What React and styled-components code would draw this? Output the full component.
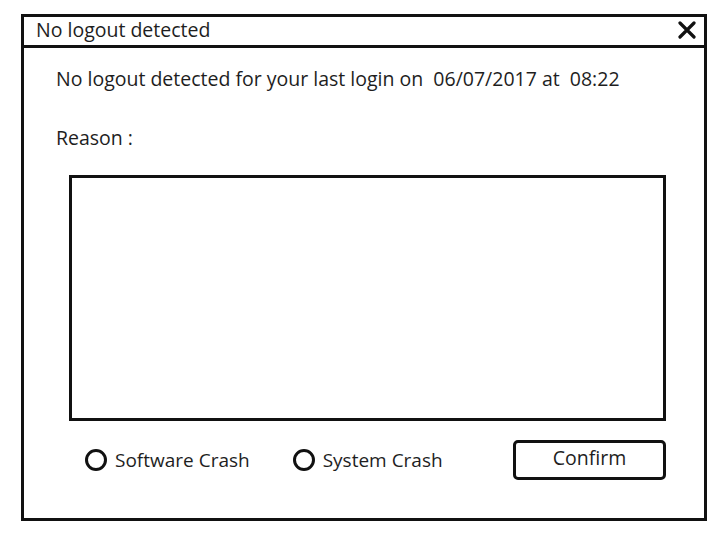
import React from "react";
import styled, { createGlobalStyle } from "styled-components";

const GlobalStyle = createGlobalStyle`
  html, body {
    margin: 0;
    padding: 0;
    background: #ffffff;
  }
  body {
    font-family: "Open Sans", "Noto Sans", sans-serif;
    color: #1e1e1e;
  }
`;

const Window = styled.div`
  box-sizing: border-box;
  margin: 14px 0 0 21px;
  width: 686px;
  height: 507px;
  border: 3px solid #111;
  display: flex;
  flex-direction: column;
`;

const TitleBar = styled.div`
  box-sizing: border-box;
  height: 31px;
  border-bottom: 3px solid #111;
  display: flex;
  align-items: center;
  justify-content: space-between;
  padding: 0 8px 2px 12px;
`;

const Title = styled.span`
  font-size: 19.5px;
  line-height: 1;
`;

const Close = styled.svg`
  width: 18px;
  height: 18px;
`;

const Body = styled.div`
  flex: 1;
  display: flex;
  flex-direction: column;
  padding: 19px 38px 0 32px;
`;

const Message = styled.p`
  margin: 0;
  font-size: 19.5px;
  line-height: 24px;
  white-space: pre;
`;

const Label = styled.p`
  margin: 35px 0 0;
  font-size: 19.5px;
  line-height: 24px;
`;

const ReasonBox = styled.textarea`
  box-sizing: border-box;
  display: block;
  flex: none;
  margin: 25px 0 0 13px;
  width: 597px;
  height: 246px;
  border: 3px solid #111;
  resize: none;
  outline: none;
  font: inherit;
`;

const Footer = styled.div`
  display: flex;
  align-items: center;
  margin: 19px 0 0 29px;
`;

const Option = styled.label`
  display: flex;
  align-items: center;
  gap: 8px;
  font-size: 19px;
  margin-right: ${(p) => p.$space}px;
`;

const Radio = styled.span`
  box-sizing: border-box;
  width: 22px;
  height: 22px;
  border: 3px solid #111;
  border-radius: 50%;
`;

const Confirm = styled.button`
  box-sizing: border-box;
  flex: none;
  margin-left: auto;
  width: 153px;
  height: 40px;
  border: 3px solid #111;
  border-radius: 5px;
  background: #fff;
  font: inherit;
  font-size: 19.5px;
  color: #1e1e1e;
  padding: 0 0 6px;
`;

export default function App() {
  return (
    <>
      <GlobalStyle />
      <Window>
        <TitleBar>
          <Title>No logout detected</Title>
          <Close viewBox="0 0 18 18">
            <path d="M2 2 L16 16 M16 2 L2 16" stroke="#111" strokeWidth="3.2" strokeLinecap="round" fill="none" />
          </Close>
        </TitleBar>
        <Body>
          <Message>{"No logout detected for your last login on  06/07/2017 at  08:22"}</Message>
          <Label>Reason :</Label>
          <ReasonBox />
          <Footer>
            <Option $space={43}>
              <Radio />
              Software Crash
            </Option>
            <Option $space={0}>
              <Radio />
              System Crash
            </Option>
            <Confirm>Confirm</Confirm>
          </Footer>
        </Body>
      </Window>
    </>
  );
}
